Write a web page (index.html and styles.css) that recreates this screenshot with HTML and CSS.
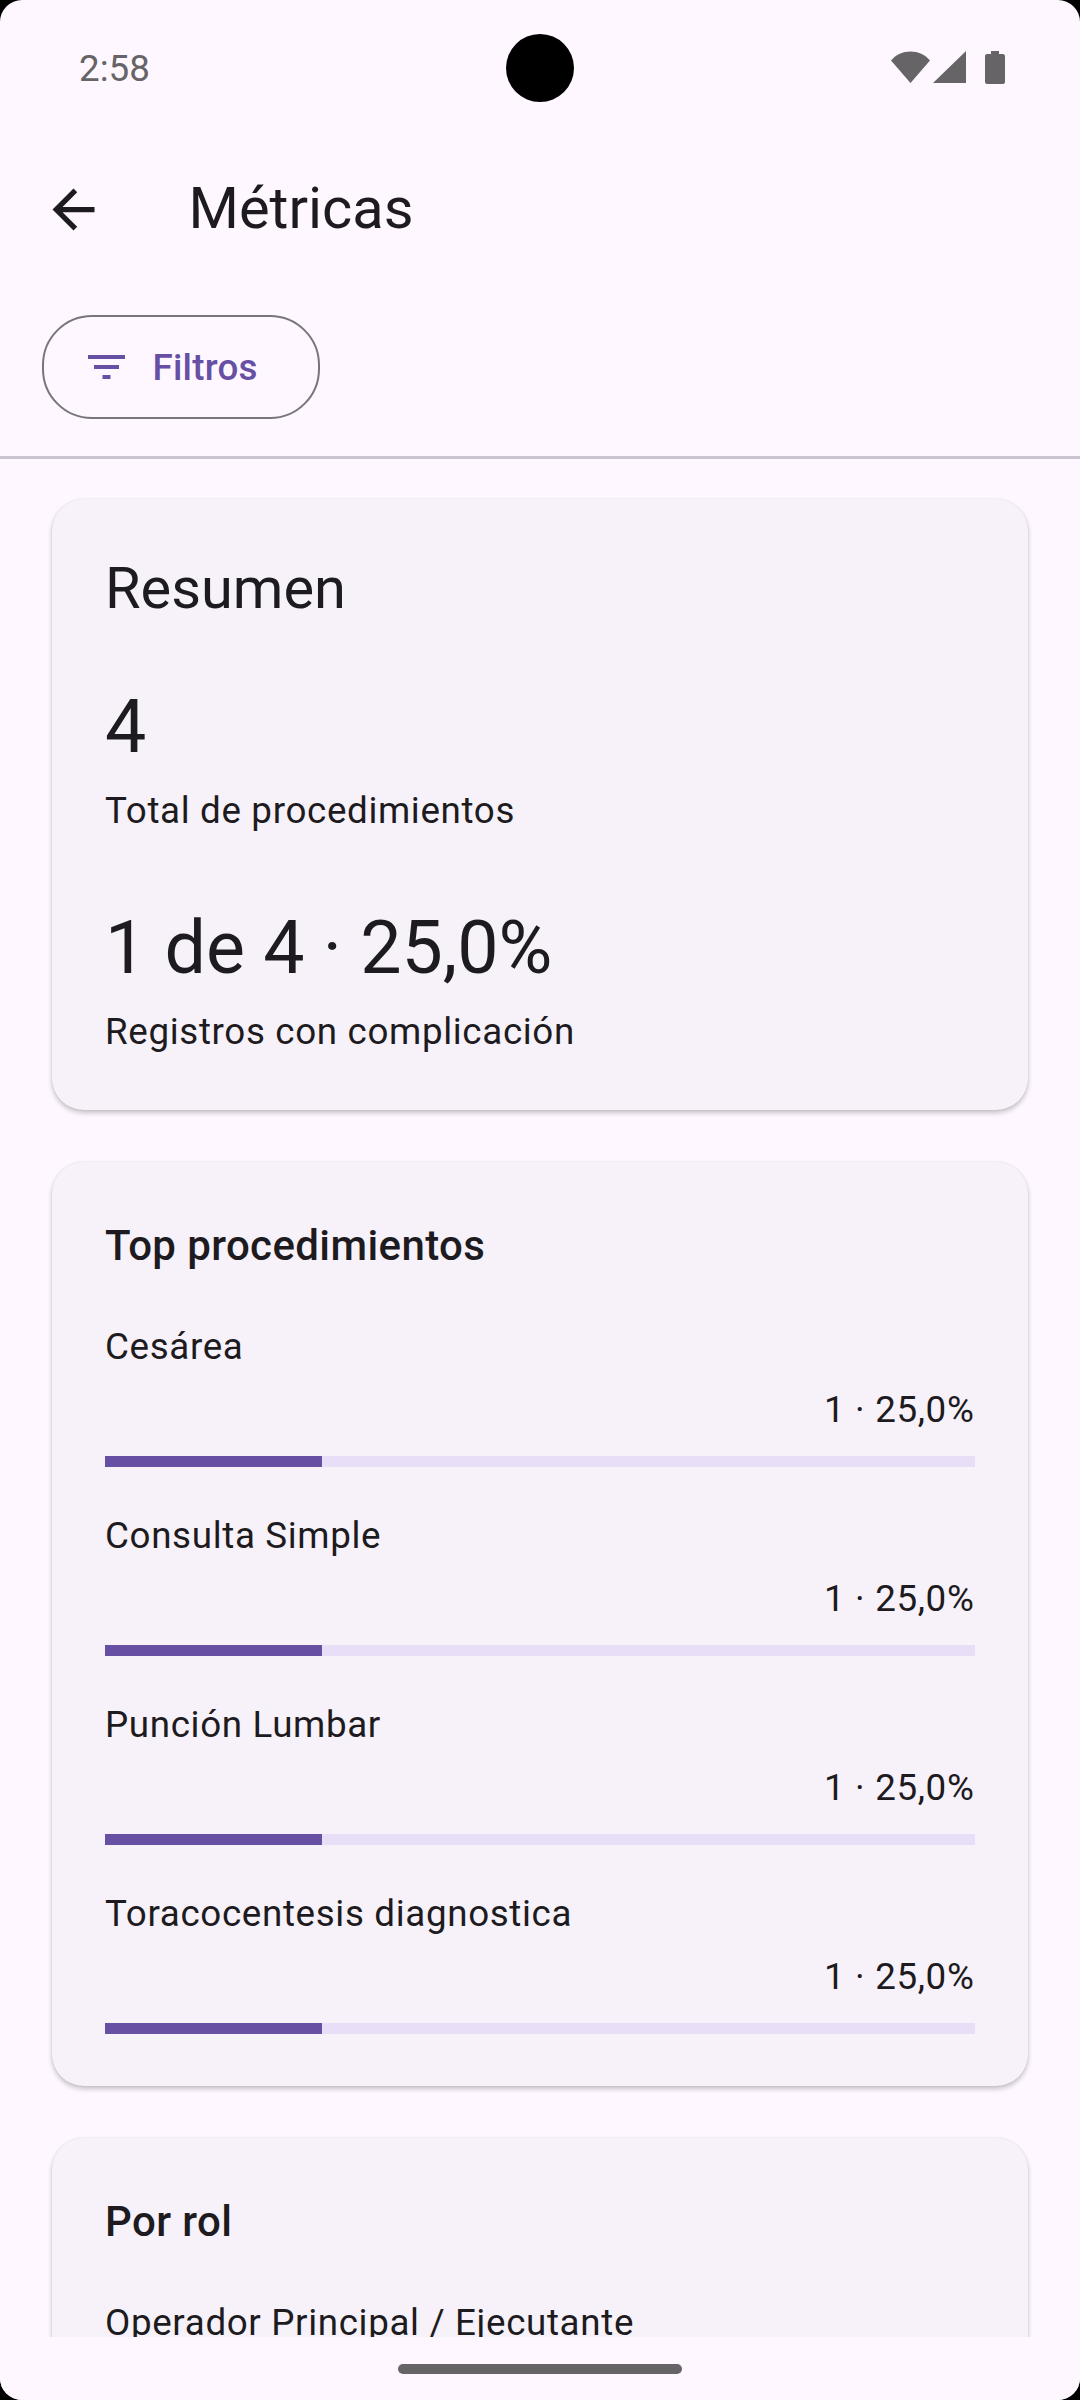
FILE: index.html
```html
<!DOCTYPE html>
<html lang="es">
<head>
  <meta charset="UTF-8">
  <title>Métricas</title>
  <link rel="stylesheet" href="styles.css">
</head>
<body>
<div class="screen">
  <div class="status">
    <span class="time">2:58</span>
    <span class="camera"></span>
    <div class="status-icons">
      <svg class="wifi" width="40" height="32" viewBox="0 0 40 32"><path d="M0 9.5C5 3.5 12 0.5 19.5 0.5S34 3.5 39 9.5L19.5 32Z"/></svg>
      <svg class="signal" width="33" height="32" viewBox="0 0 33 32"><path d="M33 0V32H0Z"/></svg>
      <svg class="battery" width="20" height="33" viewBox="0 0 20 33"><path d="M6 0H14V3H18C19 3 20 4 20 5V31C20 32 19 33 18 33H2C1 33 0 32 0 31V5C0 4 1 3 2 3H6Z"/></svg>
    </div>
  </div>

  <div class="appbar">
    <svg class="back" width="63" height="63" viewBox="0 0 24 24"><path d="M20 11H7.83l5.59-5.59L12 4l-8 8 8 8 1.41-1.41L7.83 13H20v-2z"/></svg>
    <h1>Métricas</h1>
  </div>

  <div class="filters">
    <div class="chip">
      <svg width="37" height="24" viewBox="0 0 37 24"><path d="M0 0H37V4H0ZM6 10H31V14H6ZM14.5 20H22.5V24H14.5Z"/></svg>
      <span>Filtros</span>
    </div>
  </div>

  <div class="content">
    <div class="card">
      <h2 class="big-title">Resumen</h2>
      <div class="stat first">
        <div class="stat-value">4</div>
        <div class="stat-label">Total de procedimientos</div>
      </div>
      <div class="stat">
        <div class="stat-value">1 de 4 · 25,0%</div>
        <div class="stat-label">Registros con complicación</div>
      </div>
    </div>

    <div class="card">
      <h2 class="title">Top procedimientos</h2>
      <div class="row">
        <div class="row-name">Cesárea</div>
        <div class="row-value">1 · 25,0%</div>
        <div class="bar"><div class="bar-fill" style="width: 25%"></div></div>
      </div>
      <div class="row">
        <div class="row-name">Consulta Simple</div>
        <div class="row-value">1 · 25,0%</div>
        <div class="bar"><div class="bar-fill" style="width: 25%"></div></div>
      </div>
      <div class="row">
        <div class="row-name">Punción Lumbar</div>
        <div class="row-value">1 · 25,0%</div>
        <div class="bar"><div class="bar-fill" style="width: 25%"></div></div>
      </div>
      <div class="row">
        <div class="row-name">Toracocentesis diagnostica</div>
        <div class="row-value">1 · 25,0%</div>
        <div class="bar"><div class="bar-fill" style="width: 25%"></div></div>
      </div>
    </div>

    <div class="card">
      <h2 class="title">Por rol</h2>
      <div class="row">
        <div class="row-name">Operador Principal / Ejecutante</div>
        <div class="row-value">1 · 25,0%</div>
        <div class="bar"><div class="bar-fill" style="width: 25%"></div></div>
      </div>
    </div>
  </div>

  <div class="navbar"><span class="handle"></span></div>
</div>
</body>
</html>
```

FILE: styles.css
```css
* {
  padding: 0;
  margin: 0;
  box-sizing: border-box;
}

html, body {
  background: #000;
}

body {
  font-family: Roboto, "Noto Sans", sans-serif;
  color: #1d1b20;
}

.screen {
  width: 1080px;
  height: 2400px;
  background: #fef7ff;
  border-radius: 22px;
  overflow: hidden;
  display: flex;
  flex-direction: column;
}

/* barra de estado */
.status {
  height: 136px;
  flex: none;
  padding: 34px 75px 0 79px;
  display: flex;
  justify-content: space-between;
  align-items: flex-start;
  position: relative;
}

.time {
  font-size: 36.75px;
  line-height: 69px;
  color: #666467;
}

.camera {
  width: 68px;
  height: 68px;
  background: #000;
  border-radius: 50%;
  position: absolute;
  left: 506px;
  top: 34px;
}

.status-icons {
  display: flex;
  align-items: flex-start;
  padding-top: 17px;
}

.status-icons svg {
  fill: #666467;
  display: block;
}

.signal {
  margin-left: 2px;
}

.battery {
  margin-left: 19px;
}

/* titulo */
.appbar {
  height: 144px;
  flex: none;
  padding-left: 42px;
  display: flex;
  align-items: center;
  gap: 83.5px;
}

.back {
  fill: #1d1b20;
  margin-top: 3px;
}

.appbar h1 {
  font-size: 57.75px;
  font-weight: 400;
  line-height: 72px;
}

.filters {
  flex: none;
  height: 179px;
  padding: 35px 0 0 42px;
  border-bottom: 3px solid #cac4d0;
}

.chip {
  width: 278px;
  height: 104px;
  border: 2.6px solid #79747e;
  border-radius: 50px;
  padding-left: 44.4px;
  display: flex;
  align-items: center;
  gap: 27px;
  color: #6750a4;
  font-size: 36.75px;
  font-weight: 500;
  letter-spacing: 0.26px;
}

.chip svg {
  fill: #6750a4;
  flex: none;
}

/* tarjetas */
.content {
  height: 1878px;
  flex: none;
  overflow: hidden;
  padding: 40px 52.5px 0 52px;
  display: flex;
  flex-direction: column;
  gap: 51.5px;
}

.card {
  flex: none;
  background: #f7f2fa;
  border-radius: 32px;
  padding: 53px 53px 52px;
  box-shadow: 0 3px 5px rgba(0, 0, 0, 0.22), 0 0 2px rgba(0, 0, 0, 0.1);
}

.big-title {
  font-size: 57.75px;
  font-weight: 400;
  line-height: 72px;
}

.title {
  font-size: 42px;
  font-weight: 500;
  letter-spacing: 0.39px;
  line-height: 62px;
}

.stat {
  margin-top: 69px;
}

.stat.first {
  margin-top: 61px;
}

.stat-value {
  font-size: 73.5px;
  line-height: 84px;
}

.stat-label {
  margin-top: 16px;
  font-size: 36.75px;
  letter-spacing: 0.65px;
  line-height: 52px;
}

.row {
  margin-top: 44.5px;
}

.row + .row {
  margin-top: 43px;
}

.row-name, .row-value {
  font-size: 36.75px;
  letter-spacing: 0.65px;
  line-height: 52px;
}

.row-value {
  margin-top: 10.5px;
  text-align: right;
}

.bar {
  height: 11px;
  margin-top: 20.5px;
  background: #e8def8;
  overflow: hidden;
}

.bar-fill {
  height: 100%;
  background: #6750a4;
}

/* barra de navegacion */
.navbar {
  flex: 1;
  background: #fef7ff;
  position: relative;
  z-index: 1;
  display: flex;
  justify-content: center;
  padding-top: 27px;
}

.handle {
  width: 284px;
  height: 10px;
  background: #666467;
  border-radius: 5px;
}
```
